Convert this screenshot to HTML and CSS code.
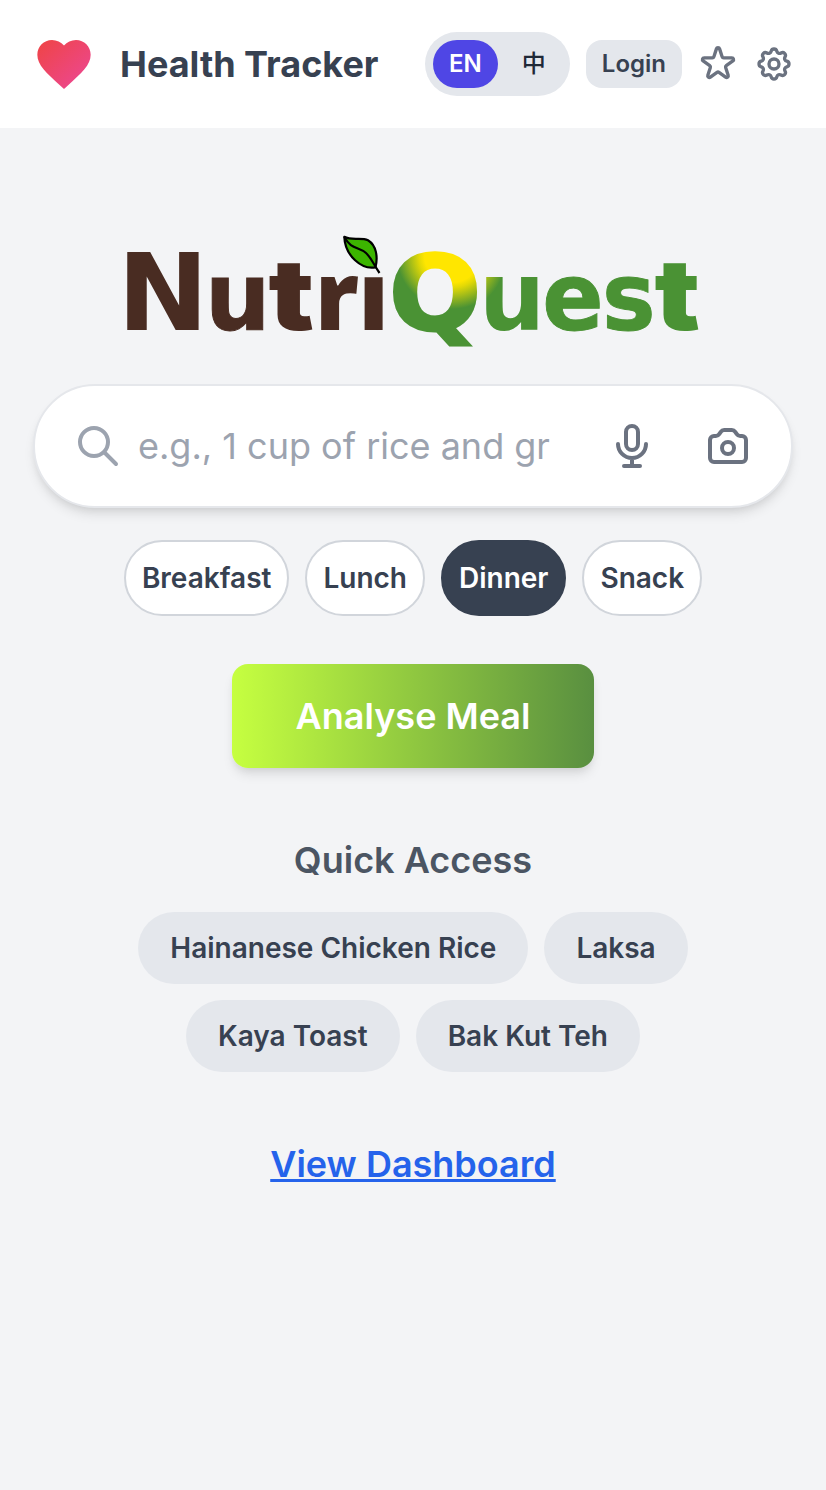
FILE: index.html
```html
<!DOCTYPE html>
<html lang="en">
<head>
<meta charset="utf-8">
<title>Health Tracker</title>
<link rel="stylesheet" href="styles.css">
</head>
<body>
<header class="header">
  <svg class="heart" viewBox="0 0 24 24"><defs><linearGradient id="hg" x1="0" y1="0" x2="1" y2="1"><stop offset="0" stop-color="#ef4444"/><stop offset="1" stop-color="#ec4899"/></linearGradient></defs><path fill="url(#hg)" d="M12 21.35l-1.45-1.32C5.4 15.36 2 12.28 2 8.5 2 5.42 4.42 3 7.5 3c1.74 0 3.41.81 4.5 2.09C13.09 3.81 14.76 3 16.5 3 19.58 3 22 5.42 22 8.5c0 3.78-3.4 6.86-8.55 11.54L12 21.35z"/></svg>
  <h1 class="title">Health Tracker</h1>
  <div class="actions">
    <div class="langs"><button class="lang lang-on">EN</button><button class="lang lang-zh">中</button></div>
    <button class="login">Login</button>
    <svg class="icon" viewBox="0 0 24 24"><path d="M11.049 2.927c.3-.921 1.603-.921 1.902 0l1.519 4.674a1 1 0 00.95.69h4.915c.969 0 1.371 1.24.588 1.81l-3.976 2.888a1 1 0 00-.363 1.118l1.518 4.674c.3.922-.755 1.688-1.538 1.118l-3.976-2.888a1 1 0 00-1.176 0l-3.976 2.888c-.783.57-1.838-.197-1.538-1.118l1.518-4.674a1 1 0 00-.363-1.118l-3.976-2.888c-.784-.57-.38-1.81.588-1.81h4.914a1 1 0 00.951-.69l1.519-4.674z"/></svg>
    <svg class="icon" viewBox="0 0 24 24"><path d="M10.325 4.317c.426-1.756 2.924-1.756 3.35 0a1.724 1.724 0 002.573 1.066c1.543-.94 3.31.826 2.37 2.37a1.724 1.724 0 001.065 2.572c1.756.426 1.756 2.924 0 3.35a1.724 1.724 0 00-1.066 2.573c.94 1.543-.826 3.31-2.37 2.37a1.724 1.724 0 00-2.572 1.065c-.426 1.756-2.924 1.756-3.35 0a1.724 1.724 0 00-2.573-1.066c-1.543.94-3.31-.826-2.37-2.37a1.724 1.724 0 00-1.065-2.572c-1.756-.426-1.756-2.924 0-3.35a1.724 1.724 0 001.066-2.573c-.94-1.543.826-3.31 2.37-2.37.996.608 2.296.07 2.572-1.065z"/><path d="M15 12a3 3 0 11-6 0 3 3 0 016 0z"/></svg>
  </div>
</header>
<main class="main">
  <svg class="logo" viewBox="113 224 600 136" role="img" aria-label="NutriQuest">
    <defs>
      <radialGradient id="sunQ" gradientUnits="userSpaceOnUse" cx="58.2" cy="-70.8" r="51"><stop offset="0.5" stop-color="#ffe600"/><stop offset="0.6" stop-color="#e2d906"/><stop offset="1" stop-color="#4a9234"/></radialGradient>
      <radialGradient id="sunU" gradientUnits="userSpaceOnUse" cx="-29" cy="-76.8" r="58"><stop offset="0.5" stop-color="#ffe600"/><stop offset="1" stop-color="#4a9234"/></radialGradient>
    </defs>
    <g class="word brown">
      <text transform="matrix(1.091 0 0 1.075 117.2 329.5)">N</text>
      <text class="bold" transform="matrix(.92 0 0 .95 204.9 329.5)">u</text>
      <text class="tee" transform="matrix(1.141 0 0 .986 268.5 330)">t</text>
      <text class="arr" transform="matrix(.938 0 0 .955 314.9 329.5)">r</text>
      <text transform="matrix(1.028 0 0 .955 356 329.5)">ı</text>
    </g>
    <g class="word green">
      <text class="quest-q" fill="url(#sunQ)" stroke="url(#sunQ)" transform="matrix(1.078 0 0 1.04 389.3 329.6)">Q</text>
      <text fill="url(#sunU)" transform="matrix(.929 0 0 .964 479 330)">u</text>
      <text class="bold" transform="matrix(.905 0 0 .95 542.3 329.5)">e</text>
      <text class="bold" transform="matrix(.9 0 0 .95 602 329.5)">s</text>
      <text class="tee" transform="matrix(1.141 0 0 .986 654.5 330)">t</text>
    </g>
    <path d="M344.300 236.800C352 241 361 237 368 240.200C376.500 245.500 378 257 375.500 267.300C362 270 345 256 344.300 236.800Z" fill="#3cb500" stroke="#000" stroke-width="2.200" stroke-linejoin="round"/>
    <path d="M344.300 236.800C351 250 359 246.500 366 253C371.500 258 373.500 264.500 379.500 273" fill="none" stroke="#000" stroke-width="2.200"/>
  </svg>
  <div class="search">
    <svg class="sicon muted" viewBox="0 0 24 24"><path d="M21 21l-6-6m2-5a7 7 0 11-14 0 7 7 0 0114 0z"/></svg>
    <div class="placeholder">e.g., 1 cup of rice and gr</div>
    <svg class="sicon mic" viewBox="0 0 24 24"><path d="M19 11a7 7 0 01-7 7m0 0a7 7 0 01-7-7m7 7v4m0 0H8m4 0h4m-4-8a3 3 0 01-3-3V5a3 3 0 116 0v6a3 3 0 01-3 3z"/></svg>
    <svg class="sicon" viewBox="0 0 24 24"><path d="M3 9a2 2 0 012-2h.93a2 2 0 001.664-.89l.812-1.22A2 2 0 0110.07 4h3.86a2 2 0 011.664.89l.812 1.22A2 2 0 0018.07 7H19a2 2 0 012 2v9a2 2 0 01-2 2H5a2 2 0 01-2-2V9z"/><path d="M15 13a3 3 0 11-6 0 3 3 0 016 0z"/></svg>
  </div>
  <div class="row meals"><button class="meal">Breakfast</button><button class="meal">Lunch</button><button class="meal meal-on">Dinner</button><button class="meal">Snack</button></div>
  <button class="analyse">Analyse Meal</button>
  <h2 class="quick">Quick Access</h2>
  <div class="row foods"><button class="food">Hainanese Chicken Rice</button><button class="food">Laksa</button><button class="food">Kaya Toast</button><button class="food">Bak Kut Teh</button></div>
  <a class="dash" href="#">View Dashboard</a>
</main>
</body>
</html>
```
FILE: styles.css
```css
* { box-sizing: border-box; margin: 0; }
body { min-height: 1490px; background: #f3f4f6; color: #374151; font-family: Inter, "Noto Sans CJK SC", sans-serif; font-variation-settings: "opsz" 14; }
button { border: 0; padding: 0; font: inherit; font-variation-settings: inherit; color: inherit; white-space: nowrap; }
.header { display: flex; align-items: center; height: 128px; padding: 0 32px; background: #fff; }
.heart { width: 64px; height: 64px; margin-right: 24px; }
.title { font-size: 36px; line-height: 56px; font-weight: 700; white-space: nowrap; }
.actions { display: flex; align-items: center; gap: 16px; margin-left: auto; }
.langs { display: flex; height: 64px; padding: 8px; border-radius: 32px; background: #e4e7ec; }
.lang { height: 48px; padding: 0 16px; border-radius: 24px; background: none; font-size: 24px; line-height: 32px; font-weight: 600; color: #1f2937; }
.lang + .lang { margin-left: 8px; }
.lang-on { background: #4f46e5; color: #fff; }
.lang-zh { font-weight: 500; }
.login { height: 48px; padding: 0 16px 2px; border-radius: 16px; background: #e4e7ec; font-size: 24px; font-weight: 600; }
.icon { width: 40px; height: 40px; fill: none; stroke: #6b7280; stroke-width: 2; stroke-linecap: round; stroke-linejoin: round; }
.main { display: flex; flex-direction: column; align-items: center; padding: 96px 33px 0; }
.logo { width: 600px; height: 136px; margin-bottom: 24px; overflow: visible; }
.word { font-family: "DejaVu Sans", sans-serif; font-weight: 700; font-size: 100px; font-variation-settings: normal; }
.tee { font-family: Inter, sans-serif; font-weight: 900; }
.arr { font-family: "Open Sans", sans-serif; font-weight: 800; }
.brown { fill: #492c22; stroke: #492c22; stroke-width: 0; }
.green { fill: #4a9234; stroke: #4a9234; stroke-width: 0; }
.bold { stroke-width: 1; }
.quest-q { stroke-width: 3; }
.search { display: flex; align-items: center; width: 760px; height: 124px; padding: 0 39px; border: 2px solid #e5e7eb; border-radius: 62px; background: #fff; box-shadow: 0 8px 12px -2px rgba(0,0,0,.1), 0 4px 8px -4px rgba(0,0,0,.1); }
.sicon { flex: none; width: 48px; height: 48px; fill: none; stroke: #6b7280; stroke-width: 2; stroke-linecap: round; stroke-linejoin: round; }
.muted { stroke: #9ca3af; margin-right: 16px; }
.placeholder { flex: 1; font-size: 36px; line-height: 56px; color: #9ca3af; white-space: nowrap; }
.mic { margin-right: 48px; }
.row { display: flex; flex-wrap: wrap; justify-content: center; gap: 16px; }
.meals { margin-top: 32px; }
.meal { height: 76px; padding: 0 16px; border: 2px solid #d1d5db; border-radius: 38px; background: #fff; font-size: 28px; font-weight: 600; }
.meal-on { background: #374151; border-color: #374151; color: #fff; }
.analyse { height: 104px; margin-top: 48px; padding: 0 64px; border-radius: 16px; background: linear-gradient(90deg, #c6ff40, #abe440 25%, #598f40); color: #fff; font-size: 36px; font-weight: 600; box-shadow: 0 8px 12px -2px rgba(0,0,0,.1), 0 4px 8px -4px rgba(0,0,0,.1); }
.quick { margin-top: 64px; font-size: 36px; line-height: 56px; font-weight: 600; color: #4b5563; }
.foods { width: 600px; margin-top: 24px; }
.food { height: 72px; padding: 0 32px; border-radius: 36px; background: #e4e7ec; font-size: 28px; font-weight: 600; }
.dash { margin-top: 64px; font-size: 36px; line-height: 56px; font-weight: 600; color: #2563eb; text-decoration: underline; text-decoration-thickness: 3px; text-decoration-skip-ink: none; }
```
